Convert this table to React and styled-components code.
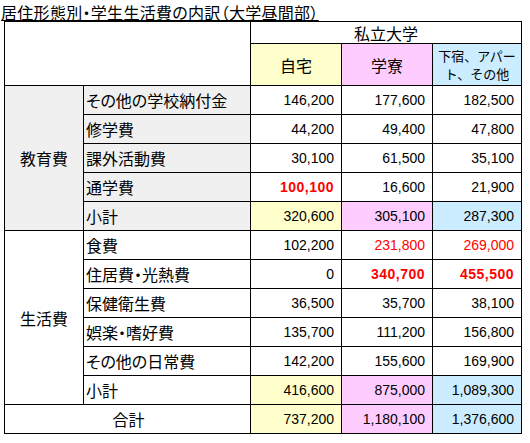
import React from "react";
import styled, { createGlobalStyle } from "styled-components";

const GlobalStyle = createGlobalStyle`
  body {
    margin: 0;
    background: #ffffff;
    font-family: "Noto Sans CJK JP", "Liberation Sans", sans-serif;
    color: #000000;
  }
`;

const COLORS = ["#ffffcc", "#ffccff", "#ccecff"];

const edu = [
  { label: "その他の学校納付金", values: ["146,200", "177,600", "182,500"] },
  { label: "修学費", values: ["44,200", "49,400", "47,800"] },
  { label: "課外活動費", values: ["30,100", "61,500", "35,100"] },
  { label: "通学費", values: ["100,100", "16,600", "21,900"], marks: ["bold", "", ""] },
  { label: "小計", values: ["320,600", "305,100", "287,300"], total: true },
];

const life = [
  { label: "食費", values: ["102,200", "231,800", "269,000"], marks: ["", "red", "red"] },
  { label: "住居費・光熱費", values: ["0", "340,700", "455,500"], marks: ["", "bold", "bold"] },
  { label: "保健衛生費", values: ["36,500", "35,700", "38,100"] },
  { label: "娯楽・嗜好費", values: ["135,700", "111,200", "156,800"] },
  { label: "その他の日常費", values: ["142,200", "155,600", "169,900"] },
  { label: "小計", values: ["416,600", "875,000", "1,089,300"], total: true },
];

const Page = styled.div`
  width: 530px;
  height: 443px;
  overflow: hidden;
`;

const Title = styled.div`
  padding: 3px 0 0 1px;
  line-height: 18px;
  font-size: 16px;
  font-feature-settings: "palt";
  letter-spacing: 0.3px;
  text-decoration: underline;
  text-underline-offset: 1px;
  white-space: nowrap;
`;

const Table = styled.table`
  margin-left: 4px;
  border-collapse: collapse;
  table-layout: fixed;
  width: 517px;
`;

const Row = styled.tr`
  height: ${(p) => p.$h || 29}px;
`;

const HeadCell = styled.td`
  border: 1px solid #000;
  background: ${(p) => p.$bg || "#ffffff"};
  text-align: center;
  vertical-align: middle;
  padding: 0;
  font-size: ${(p) => p.$small ? 13 : 16}px;
  line-height: ${(p) => p.$small ? 18 : 20}px;
  font-feature-settings: ${(p) => p.$small ? "normal" : "\"palt\""};
`;

const GroupCell = styled.td`
  border: 1px solid #000;
  background: ${(p) => p.$gray ? "#f0f0f0" : "#ffffff"};
  text-align: center;
  vertical-align: middle;
  font-size: 16px;
  padding: 0;
`;

const LabelCell = styled.td`
  border: 1px solid #000;
  background: ${(p) => p.$gray ? "#f0f0f0" : "#ffffff"};
  font-size: 16px;
  line-height: 20px;
  padding: 0 0 0 2px;
  white-space: nowrap;
  font-feature-settings: "palt";
  text-align: ${(p) => p.$center ? "center" : "left"};
`;

const NumCell = styled.td`
  border: 1px solid #000;
  background: ${(p) => p.$bg || "#ffffff"};
  font-family: "Liberation Sans", sans-serif;
  font-size: 14px;
  text-align: right;
  padding: 0 7px 0 0;
  color: ${(p) => (p.$mark === "red" || p.$mark === "bold") ? "#ff0000" : "#000000"};
  font-weight: ${(p) => p.$mark === "bold" ? 700 : 400};
  letter-spacing: ${(p) => p.$mark === "bold" ? "0.5px" : "0"};
`;

const Values = ({ row }) =>
  row.values.map((v, i) => (
    <NumCell key={i} $bg={row.total ? COLORS[i] : null} $mark={row.marks ? row.marks[i] : ""}>
      {v}
    </NumCell>
  ));

const Section = ({ name, rows, gray }) =>
  rows.map((row, i) => (
    <Row key={row.label + i}>
      {i === 0 && (
        <GroupCell rowSpan={rows.length} $gray={gray}>
          {name}
        </GroupCell>
      )}
      <LabelCell $gray={gray}>{row.label}</LabelCell>
      <Values row={row} />
    </Row>
  ));

export default function App() {
  return (
    <Page>
      <GlobalStyle />
      <Title>居住形態別・学生生活費の内訳（大学昼間部）</Title>
      <Table>
        <colgroup>
          <col style={{ width: 79 }} />
          <col style={{ width: 167 }} />
          <col style={{ width: 91 }} />
          <col style={{ width: 91 }} />
          <col style={{ width: 89 }} />
        </colgroup>
        <tbody>
          <Row $h={22}>
            <HeadCell colSpan={2} rowSpan={2} />
            <HeadCell colSpan={3}>私立大学</HeadCell>
          </Row>
          <Row $h={42}>
            <HeadCell $bg={COLORS[0]}>自宅</HeadCell>
            <HeadCell $bg={COLORS[1]}>学寮</HeadCell>
            <HeadCell $bg={COLORS[2]} $small>
              下宿、アパー
              <br />
              ト、その他
            </HeadCell>
          </Row>
          <Section name="教育費" rows={edu} gray />
          <Section name="生活費" rows={life} />
          <Row>
            <LabelCell colSpan={2} $center>合計</LabelCell>
            <Values row={{ values: ["737,200", "1,180,100", "1,376,600"], total: true }} />
          </Row>
        </tbody>
      </Table>
    </Page>
  );
}
